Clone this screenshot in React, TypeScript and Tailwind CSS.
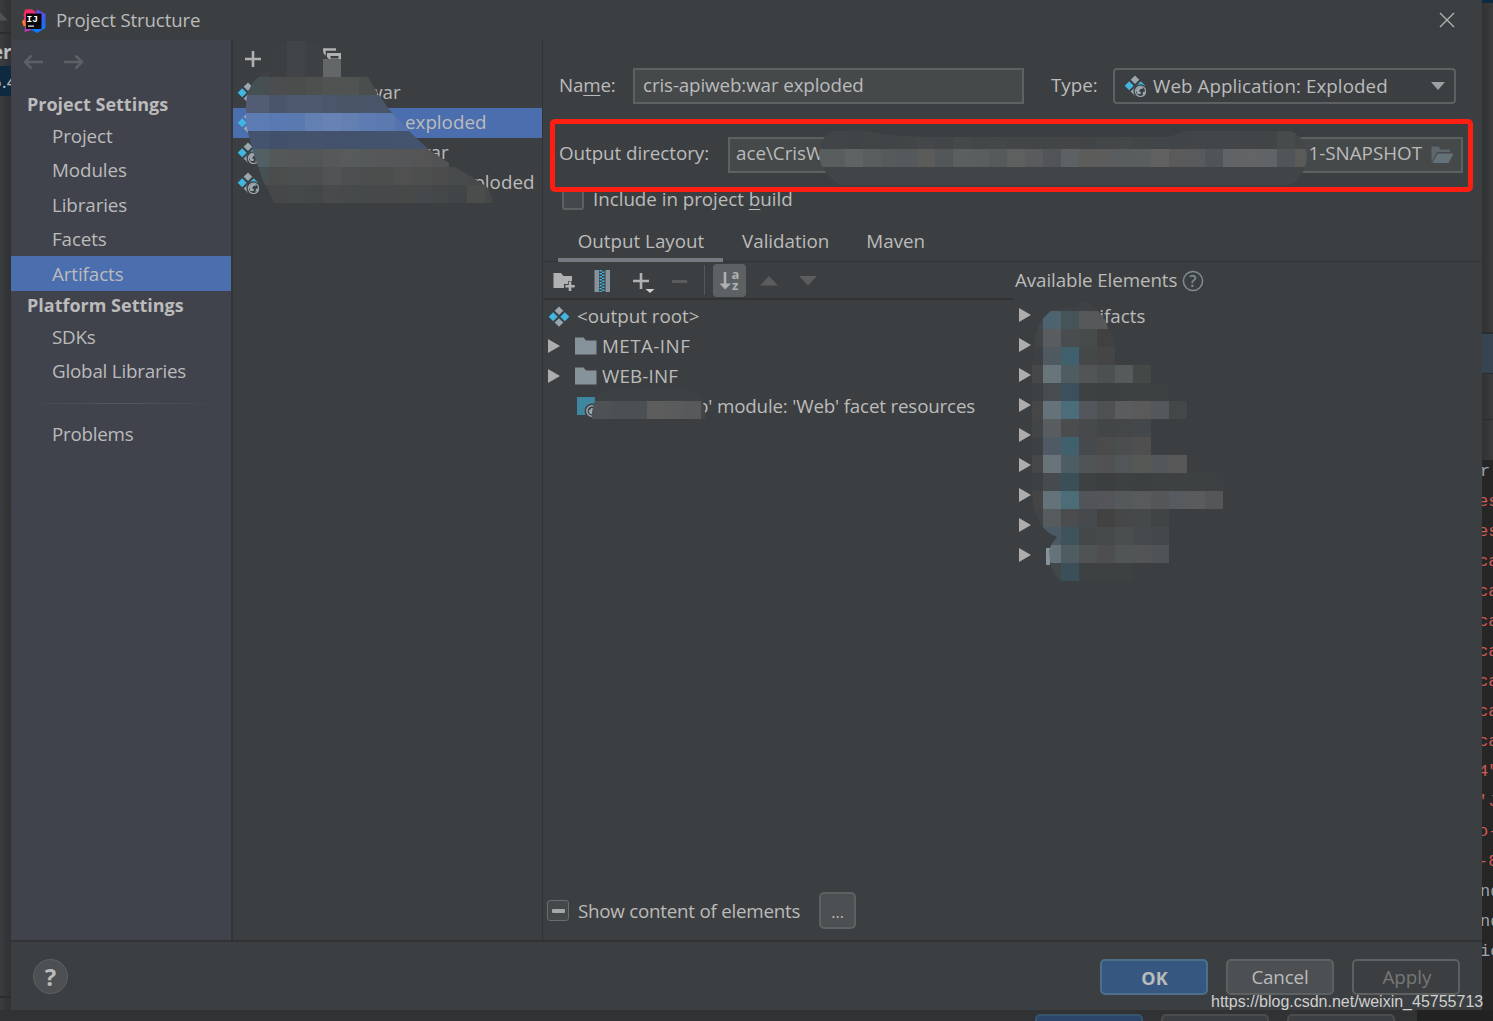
import React from "react";

const settings = ["Project", "Modules", "Libraries", "Facets", "Artifacts"];

const editorLines = [
  { text: "r", color: "text-[#9da5ae]" },
  { text: "es", color: "text-[#cf5b56]" },
  { text: "es", color: "text-[#cf5b56]" },
  { text: "ca", color: "text-[#cf5b56]" },
  { text: "ca", color: "text-[#cf5b56]" },
  { text: "ca", color: "text-[#cf5b56]" },
  { text: "ca", color: "text-[#cf5b56]" },
  { text: "ca", color: "text-[#cf5b56]" },
  { text: "ca", color: "text-[#cf5b56]" },
  { text: "ca", color: "text-[#cf5b56]" },
  { text: "4\"", color: "text-[#cf5b56]" },
  { text: "'J", color: "text-[#cf5b56]" },
  { text: "o-", color: "text-[#cf5b56]" },
  { text: "-8", color: "text-[#cf5b56]" },
  { text: "nd", color: "text-[#9da5ae]" },
  { text: "nd", color: "text-[#9da5ae]" },
  { text: "ic", color: "text-[#9da5ae]" },
];

type MosaicRow = { x: number; y: number; colors: string[] };

const listMosaic: MosaicRow[] = [
  { x: 251, y: 41, colors: ["#3d4143", "#3d4042", "#414547", "#3e4143", "#3e4143"] },
  { x: 251, y: 59, colors: ["#3f4446", "#3d4042", "#414547", "#3e4143", "#636768"] },
  { x: 251, y: 77, colors: ["#465053", "#4c4d4e", "#4b4d4d", "#4d504e", "#505352", "#4f5352", "#4a4f4e"] },
  { x: 251, y: 95, colors: ["#525d74", "#4b5569", "#4d596c", "#4c596e", "#4a566a", "#4a5568", "#495569", "#495569"] },
  { x: 251, y: 113, colors: ["#5d7cb3", "#5a79b2", "#5a79ae", "#6480b3", "#6782b4", "#647fb1", "#5f7cb2", "#5c79b0", "#5574ae"] },
  { x: 251, y: 131, colors: ["#44546e", "#42506b", "#44526c", "#44526b", "#43516d", "#42516c", "#43526d", "#44536d", "#44536e", "#44536e"] },
  { x: 251, y: 149, colors: ["#526065", "#535859", "#555657", "#535657", "#565859", "#575b5c", "#55595a", "#555758", "#545657", "#555556", "#525354"] },
  { x: 251, y: 167, colors: ["#475053", "#4b4d4d", "#4c4f50", "#4d4e4f", "#525354", "#4d4f50", "#4b4e4f", "#4c4e4e", "#505051", "#4d4e4e", "#4c4c4c", "#484b4b", "#464949", "#444747"] },
  { x: 251, y: 185, colors: ["#434748", "#454748", "#46494a", "#444748", "#484a4b", "#474a4b", "#45494a", "#464849", "#474949", "#45494b", "#434748", "#414547", "#4a4d4b", "#444847"] },
];

const outputMosaic: MosaicRow[] = [
  { x: 809, y: 131, colors: ["#414547", "#414547", "#404446", "#414546", "#414547", "#424647", "#45484a", "#424648", "#46494a", "#434748", "#444849", "#424647", "#424647", "#424647", "#444546", "#414547", "#434748", "#45484a", "#424647", "#424648", "#414547", "#424648", "#424648", "#424648", "#414547", "#414547", "#474b4c", "#434748"] },
  { x: 809, y: 149, colors: ["#5a5d5e", "#5a5d5e", "#606364", "#5a5e5f", "#575a5b", "#55595b", "#5b5c59", "#515658", "#5c5f60", "#5b5e5f", "#575a5b", "#5e6060", "#595b5c", "#515557", "#5e6164", "#5c5d5b", "#5b5c5b", "#5a5d5f", "#5b5e5f", "#626162", "#5a5a5a", "#585b5d", "#505456", "#606466", "#626465", "#606466", "#515557", "#5a5b59", "#545757"] },
  { x: 809, y: 167, colors: Array(28).fill("#414547") },
];

const elementsMosaic: MosaicRow[] = [
  { x: 1025, y: 293, colors: ["#3c3f41", "#3f4244", "#3f4244", "#3f4244", "#3f4244"] },
  { x: 1025, y: 311, colors: ["#424849", "#4d6370", "#445459", "#565859", "#565859"] },
  { x: 1025, y: 329, colors: ["#414546", "#595d5f", "#4a4d4f", "#484b4c", "#414142"] },
  { x: 1025, y: 347, colors: ["#3d4143", "#50595f", "#40606d", "#454849", "#454546"] },
  { x: 1025, y: 365, colors: ["#464748", "#68757b", "#4f5d63", "#525555", "#4b5050", "#565a5a", "#444847"] },
  { x: 1025, y: 383, colors: ["#3d4143", "#464c4f", "#3b505a", "#3d4142", "#3d4040", "#3d4142", "#3d4142", "#3e4142"] },
  { x: 1025, y: 401, colors: ["#464647", "#65727a", "#4c6c79", "#53565a", "#4d5152", "#5b5c5d", "#5b5a5b", "#55585b", "#434747"] },
  { x: 1025, y: 419, colors: ["#424546", "#595d5f", "#4a4c4e", "#474a4c", "#434647", "#444748", "#45484a"] },
  { x: 1025, y: 437, colors: ["#3d4143", "#505a64", "#40606d", "#474a4c", "#4b4b4c", "#4b4e4f", "#4f4f50"] },
  { x: 1025, y: 455, colors: ["#464748", "#68737a", "#4d5d63", "#505456", "#515153", "#525658", "#565856", "#53575a", "#585859"] },
  { x: 1025, y: 473, colors: ["#3d4143", "#464b4f", "#3b4f58", "#3d4142", "#3b3f40", "#3d4142", "#3c4041", "#3e4142", "#3d4142", "#3d4142", "#3e4143"] },
  { x: 1025, y: 491, colors: ["#454546", "#64727a", "#4c6c78", "#515458", "#545558", "#54595c", "#595a5c", "#555657", "#555b5f", "#5a5b5d", "#555658"] },
  { x: 1025, y: 509, colors: ["#404446", "#565b5e", "#4a4c4e", "#474a4c", "#424243", "#464748", "#45494a", "#404445"] },
  { x: 1025, y: 527, colors: ["#3f4446", "#4b5964", "#3f535b", "#434849", "#464a4d", "#4a4e4f", "#464a4c", "#44484b"] },
  { x: 1025, y: 545, colors: ["#424648", "#66737a", "#4f5d63", "#505354", "#4e4e50", "#525555", "#535455", "#505355"] },
  { x: 1025, y: 563, colors: ["#3f4446", "#42474a", "#3b4f58", "#3d4142", "#3d4142", "#3e4142"] },
];

const facetMosaic: MosaicRow[] = [
  { x: 575, y: 383, colors: ["#3e4143", "#3e4143", "#3e4143", "#3e4143", "#3e4143", "#3e4143", "#3e4143", "#3d4042"] },
  { x: 575, y: 401, colors: ["#4d5154", "#4e5255", "#4c5053", "#4d5052", "#5d5d5e", "#595b5c", "#58595b", "#434648"] },
];

const Mosaic: React.FC<{
  id: string;
  clip: string;
  rows: MosaicRow[];
  x: number;
  y: number;
  w: number;
  h: number;
  className: string;
}> = ({ id, clip, rows, x, y, w, h, className }) => (
  <svg className={`absolute ${className}`} width={w} height={h} viewBox={`${x} ${y} ${w} ${h}`}>
    <clipPath id={id}>
      <path d={clip} />
    </clipPath>
    <g clipPath={`url(#${id})`} shapeRendering="crispEdges">
      {rows.map((row) =>
        row.colors.map((color, i) => (
          <rect
            key={`${row.y}-${i}`}
            x={i === 0 ? row.x - 6 : row.x + i * 18}
            y={row.y}
            width={i === 0 ? 24 : 18}
            height="18"
            fill={color}
          />
        ))
      )}
    </g>
  </svg>
);

const Logo = () => (
  <svg width="24" height="24" viewBox="0 0 24 24">
    <defs>
      <linearGradient id="lg1" x1="0" y1="0" x2="1" y2="1">
        <stop offset="0" stopColor="#fe2857" />
        <stop offset="1" stopColor="#c838a0" />
      </linearGradient>
      <linearGradient id="lg2" x1="0" y1="0" x2="0" y2="1">
        <stop offset="0" stopColor="#7448e8" />
        <stop offset="0.5" stopColor="#2f63ee" />
        <stop offset="1" stopColor="#087cfa" />
      </linearGradient>
    </defs>
    <path d="M0 12.500L3 9L6 18L1.500 17z" fill="#fc801d" />
    <path d="M3 0.500L10 0.200L16 5L8 20L3.500 16L2.500 10L1.500 6z" fill="url(#lg1)" />
    <path d="M3 18L9 17L10 21L2.500 23z" fill="#b03ab8" />
    <path d="M15 0.500L23.500 5V19L15 24L8 20L14 5z" fill="url(#lg2)" />
    <rect x="4" y="4.500" width="15.500" height="15.500" fill="#080808" />
    <text x="4.500" y="12.500" fill="#fff" fontSize="9.500" fontWeight="700" fontFamily="Liberation Mono, monospace">IJ</text>
    <rect x="6" y="16.500" width="6" height="1.200" fill="#eee" />
  </svg>
);

const ArtifactIcon = ({ web = false }: { web?: boolean }) => (
  <svg className="shrink-0" width="22" height="22" viewBox="0 0 22 22">
    <path d="M11 0.500L15.300 4.800L11 9.100L6.700 4.800z" fill="#9aa7b0" />
    <path d="M5.200 6.300L9.700 10.800L5.200 15.300L0.700 10.800z" fill="#40b6e0" />
    <path d="M16.800 6.300L21.300 10.800L16.800 15.300L12.300 10.800z" fill="#40b6e0" />
    <path d="M11 12.200L15.300 16.500L11 20.800L6.700 16.500z" fill="#9aa7b0" />
    {web && (
      <>
        <circle cx="16.500" cy="16.300" r="7" fill="#3c3f41" />
        <circle cx="16.500" cy="16.300" r="5.200" fill="none" stroke="#9aa7b0" strokeWidth="1.200" />
        <path d="M11.800 15L14 12L18.500 12L19 13.500L16.500 14L15 16L17 17.500L16.500 19L13.500 19z" fill="#9aa7b0" />
        <path d="M19 17L21.500 16L20.500 19L18.500 20z" fill="#9aa7b0" />
      </>
    )}
  </svg>
);

const FolderIcon = () => (
  <svg className="shrink-0" width="22" height="18" viewBox="0 0 22 18">
    <path d="M0 0.500H8.500L11 3.500H21.500V17.500H0z" fill="#87939a" />
  </svg>
);

const Expander = () => (
  <svg className="mb-px shrink-0" width="12" height="14" viewBox="0 0 12 14">
    <path d="M0 0L12 7L0 14z" fill="#adadad" />
  </svg>
);

const Plus = () => (
  <svg width="16" height="16" viewBox="0 0 16 16">
    <path d="M8 0V16M0 8H16" stroke="#afb1b3" strokeWidth="2.600" />
  </svg>
);

const Sidebar = () => (
  <div className="w-[222px] shrink-0 border-r-2 border-[#343537] bg-[#40434c]">
    <div className="flex h-[48px] items-center gap-[19px] pb-[4px] pl-[12px]">
      <svg width="21" height="16" viewBox="0 0 21 16">
        <path d="M8.500 1.500L2 8L8.500 14.500M2 8H20" fill="none" stroke="#5d6064" strokeWidth="2.500" />
      </svg>
      <svg width="21" height="16" viewBox="0 0 21 16">
        <path d="M12.500 1.500L19 8L12.500 14.500M19 8H1" fill="none" stroke="#5d6064" strokeWidth="2.500" />
      </svg>
    </div>
    <div className="flex h-[31px] items-center pl-[16px] text-[18px] font-bold">Project Settings</div>
    {settings.map((item, i) => (
      <div
        key={item}
        className={`flex items-center pl-[41px] ${item === "Artifacts" ? "bg-[#4b6eaf] pt-[2px]" : "pt-px"} ${i === 4 ? "h-[35px]" : i === 0 ? "h-[34px]" : "h-[34.3px]"}`}
      >
        <span className="tracking-[-0.1px]">{item}</span>
      </div>
    ))}
    <div className="flex h-[29px] items-center pl-[16px] text-[18px] font-bold">Platform Settings</div>
    <div className="flex h-[34px] items-center pl-[41px] pt-[2px] tracking-[-0.2px]">SDKs</div>
    <div className="flex h-[34px] items-center pl-[41px] pt-[2px] tracking-[-0.2px]">Global Libraries</div>
    <div className="mx-[12px] mt-[15px] h-px bg-linear-to-r from-transparent via-[#55585f] to-transparent" />
    <div className="mt-[13px] flex h-[34px] items-center pl-[41px] pt-[2px] tracking-[-0.25px]">Problems</div>
  </div>
);

const ArtifactList = () => (
  <div className="relative w-[310px] shrink-0 border-r border-[#323334]">
    <div className="flex h-[37px] items-center justify-between pl-[12px] pr-[201px]">
      <Plus />
      <svg className="mb-[4px]" width="18" height="18" viewBox="0 0 18 18">
        <path d="M0 1.500H13M1.500 1V12" stroke="#afb1b3" strokeWidth="2.400" />
        <path d="M4 5H18V18H4zM7.500 8V10.500H15.500V8z" fill="#afb1b3" fillRule="evenodd" />
      </svg>
    </div>
    <div className="flex h-[31px] items-center pl-[4px]">
      <ArtifactIcon />
      <span className="ml-[109px]">war</span>
    </div>
    <div className="flex h-[30px] items-center bg-[#4b6eaf] pl-[4px]">
      <ArtifactIcon />
      <span className="mb-[2px] ml-[146px]">exploded</span>
    </div>
    <div className="flex h-[30px] items-center pl-[4px]">
      <ArtifactIcon web />
      <span className="mb-[2px] ml-[157px]">war</span>
    </div>
    <div className="flex h-[30px] items-center pl-[4px]">
      <ArtifactIcon web />
      <span className="mb-[2px] ml-[194px]">exploded</span>
    </div>
    <Mosaic
      id="list"
      rows={listMosaic}
      x={233}
      y={40}
      w={300}
      h={170}
      className="left-0 top-0"
      clip="M269 71V59Q272 46 287 41H306Q318 43 324 54L329 59H341V77H368L377 92L388 108L408 130L428 149L449 163V167H455L475 179L487 187Q491 192 493 203H274L263 181L254 155L246 125V104Q247 80 269 71z"
    />
  </div>
);

const Toolbar = () => (
  <div className="flex h-[38px] w-[470px] items-center border-b-2 border-[#323334] pl-[10px]">
    <svg className="mt-[2px]" width="22" height="20" viewBox="0 0 22 20">
      <path d="M0.500 2H8L10.500 5H19V10H15V13H11V17H0.500z" fill="#afb1b3" />
      <path d="M17 10.500V20M12.300 15.200H21.700" stroke="#afb1b3" strokeWidth="2.600" />
    </svg>
    <svg className="ml-[19px] mt-[2px]" width="17" height="22" viewBox="0 0 17 22">
      <path d="M0.500 0H5V22H0.500zM11.500 0H16V22H11.500z" fill="#87939a" />
      <path d="M6.700 0V22" stroke="#40b6e0" strokeWidth="2.400" strokeDasharray="1.500 1.500" />
      <path d="M9.300 1.500V22" stroke="#40b6e0" strokeWidth="2.400" strokeDasharray="1.500 1.500" />
    </svg>
    <svg className="ml-[21px] mt-[2px]" width="24" height="24" viewBox="0 0 24 24">
      <path d="M9 4V20M1 12H17" stroke="#afb1b3" strokeWidth="2.600" />
      <path d="M13.500 20H22.500L18 24z" fill="#d0d0d0" />
    </svg>
    <div className="ml-[16px] mt-[2px] h-[3px] w-[15px] bg-[#5b5c5d]" />
    <div className="ml-[17px] h-[30px] w-px bg-[#555758]" />
    <div className="ml-[8px] flex h-[33px] w-[33px] items-center justify-center rounded-[4px] bg-[#5c6164]">
      <svg width="22" height="24" viewBox="0 0 22 24">
        <path d="M6 4V17" stroke="#afb1b3" strokeWidth="2.600" />
        <path d="M0.500 15.500H12L6.200 21.500z" fill="#afb1b3" />
        <text x="12.500" y="11" fill="#afb1b3" fontSize="13" fontWeight="700" fontFamily="Open Sans, sans-serif">a</text>
        <text x="13" y="21.500" fill="#afb1b3" fontSize="13" fontWeight="700" fontFamily="Open Sans, sans-serif">z</text>
      </svg>
    </div>
    <svg className="ml-[14px] mt-[2px]" width="18" height="10" viewBox="0 0 18 10">
      <path d="M9 0L18 9.500H0z" fill="#5b5c5d" />
    </svg>
    <svg className="ml-[21px] mt-px" width="18" height="10" viewBox="0 0 18 10">
      <path d="M9 9.500L18 0H0z" fill="#5b5c5d" />
    </svg>
  </div>
);

const OutputTree = () => (
  <div className="relative flex w-[470px] flex-col pt-px">
    <div className="flex h-[30px] items-center gap-[7px] pl-[5px]">
      <div className="mt-px">
        <ArtifactIcon />
      </div>
      <span>&lt;output root&gt;</span>
    </div>
    {[
      { name: "META-INF", tracking: "tracking-[0.45px]" },
      { name: "WEB-INF", tracking: "tracking-[0.15px]" },
    ].map(({ name, tracking }) => (
      <div key={name} className="flex h-[30px] items-center pl-[5px]">
        <Expander />
        <div className="ml-[15px]">
          <FolderIcon />
        </div>
        <span className={`ml-[5px] ${tracking}`}>{name}</span>
      </div>
    ))}
    <div className="flex h-[30px] items-center pl-[34px]">
      <svg className="shrink-0" width="22" height="22" viewBox="0 0 22 22">
        <rect y="2" width="18" height="18" fill="#3f87a1" />
        <circle cx="15" cy="16" r="7.500" fill="#3c3f41" />
        <circle cx="15" cy="16" r="5.200" fill="none" stroke="#9aa7b0" strokeWidth="1.500" />
        <path d="M11.500 16L14.500 13L17 13L15 17L16 19L13 19z" fill="#9aa7b0" />
      </svg>
      <span className="ml-[98px] whitespace-nowrap tracking-[-0.18px]">b' module: 'Web' facet resources</span>
    </div>
    <Mosaic
      id="facet"
      rows={facetMosaic}
      x={543}
      y={383}
      w={200}
      h={40}
      className="left-0 top-[83px]"
      clip="M595 401Q603 389 616 387H684Q696 391 702 401Q706 408 705 419H592Q592 406 595 401Z"
    />
  </div>
);

const AvailableElements = () => (
  <div className="relative flex flex-1 flex-col">
    <div className="flex h-[38px] items-center pl-[2px]">
      <span className="mb-[2px] tracking-[-0.1px]">Available Elements</span>
      <svg className="ml-[5px]" width="22" height="22" viewBox="0 0 22 22">
        <circle cx="11" cy="11" r="9.600" fill="none" stroke="#7f8b91" strokeWidth="1.500" />
        <text x="11" y="16.500" textAnchor="middle" fill="#7f8b91" fontSize="16" fontWeight="600" fontFamily="Open Sans, sans-serif">?</text>
      </svg>
    </div>
    {[0, 1, 2, 3, 4, 5, 6, 7, 8].map((i) => (
      <div key={i} className="flex h-[30px] items-center pl-[6px] pt-px">
        <Expander />
        {i === 0 && <span className="ml-[42px] mt-px">Artifacts</span>}
      </div>
    ))}
    <div className="absolute left-[33px] top-[286px] h-[17px] w-[4px] bg-[#87939a]" />
    <Mosaic
      id="elements"
      rows={elementsMosaic}
      x={1013}
      y={300}
      w={220}
      h={290}
      className="left-0 top-[38px]"
      clip="M1034 347Q1035 322 1052 310L1079 306V302Q1090 301 1100 313Q1106 319 1108 329Q1114 335 1115 347V365H1151V383H1169V401H1187V419H1151V455H1187V473H1223V509H1169V563H1133V581H1061Q1050 573 1049 551Q1051 543 1057 537Q1044 532 1039 521Q1032 509 1032 491V365H1034z"
    />
  </div>
);

const Main = () => (
  <div className="relative flex flex-1 flex-col">
    <div className="flex h-[91px] items-center pl-[16px]">
      <span className="w-[74px] tracking-[-0.2px]">
        Na<span className="underline underline-offset-[3px]">m</span>e:
      </span>
      <div className="flex h-[36px] w-[391px] items-center border-2 border-[#5e6162] bg-[#45494a] pl-[8px] tracking-[-0.12px]">
        cris-apiweb:war exploded
      </div>
      <span className="ml-[27px] w-[62px]">Type:</span>
      <div className="flex h-[36px] w-[343px] items-center rounded-[4px] border-2 border-[#5e6162] pl-[9px] pr-[9px]">
        <ArtifactIcon web />
        <span className="ml-[7px] mt-px flex-1 whitespace-nowrap tracking-[0.05px]">Web Application: Exploded</span>
        <svg width="14" height="8" viewBox="0 0 14 8">
          <path d="M0 0H14L7 8z" fill="#9da0a2" />
        </svg>
      </div>
    </div>

    <div className="flex h-[47px] items-center pl-[16px]">
      <span className="mb-[2px] w-[169px] tracking-[-0.05px]">Output directory:</span>
      <div className="flex h-[36px] w-[735px] items-center justify-between border-2 border-[#5e6162] bg-[#45494a] pl-[6px] pr-[7px]">
        <span className="mb-[2px]">ace\CrisW</span>
        <div className="flex items-center gap-[9px]">
          <span className="mb-[2px]">1-SNAPSHOT</span>
          <svg className="mt-[2px]" width="23" height="18" viewBox="0 0 23 18">
            <path d="M0.500 15V0.500H7.500L10 3.500H19V6H6L1 16z" fill="#5d676c" />
            <path d="M6.500 7.500H22.500L17.500 17H1.500z" fill="#66727a" />
          </svg>
        </div>
      </div>
    </div>

    <div className="flex h-[42px] items-center pl-[19px]">
      <div className="h-[21px] w-[22px] rounded-[3px] border-2 border-[#5e6162] bg-[#43484a]" />
      <span className="ml-[9px] tracking-[-0.03px]">
        Include in project <span className="underline underline-offset-[3px]">b</span>uild
      </span>
    </div>

    <div className="flex h-[42px] border-b border-[#323334] pl-[15px]">
      <div className="flex h-[42px] w-[165px] items-center justify-center border-b-4 border-[#747a80] pl-px pt-[4px]">Output Layout</div>
      <div className="flex h-[42px] items-center pl-[19px]">Validation</div>
      <div className="flex h-[42px] items-center pl-[37px]">Maven</div>
    </div>

    <div className="flex flex-1">
      <div className="flex flex-col">
        <Toolbar />
        <OutputTree />
      </div>
      <AvailableElements />
    </div>

    <div className="flex h-[58px] items-start pl-[4px]">
      <div className="mt-[18px] flex h-[21px] w-[22px] items-center justify-center rounded-[3px] border-[1.5px] border-[#6b6d6e] bg-[#43484a]">
        <div className="h-[4px] w-[13px] rounded-[1px] bg-[#a7a7a7]" />
      </div>
      <span className="ml-[9px] mt-[14px] leading-[30px] tracking-[-0.25px]">Show content of elements</span>
      <div className="ml-[19px] mt-[10px] flex h-[37px] w-[37px] items-center justify-center rounded-[5px] border-2 border-[#5e6162] bg-[#4c5052] pt-[3px] text-[16px]">
        ...
      </div>
    </div>

    <Mosaic
      id="output"
      rows={outputMosaic}
      x={800}
      y={125}
      w={520}
      h={65}
      className="left-[257px] top-[85px]"
      clip="M819 155Q821 136 832 131H867Q890 136 925 137H1165Q1177 135 1184 131H1291Q1307 138 1307 158Q1304 179 1290 185H840Q820 172 819 155z"
    />
    <div className="absolute left-[7px] top-[79px] h-[73px] w-[923px] rounded-[5px] border-5 border-[#ff1e12]" />
  </div>
);

const LeftStrip = () => (
  <div className="flex w-[11px] shrink-0 flex-col overflow-hidden bg-linear-to-r from-[#3a3d3f] to-[#2f3133]">
    <div className="flex h-[34px] items-end border-b-2 border-[#2c2d2e] pb-[11px]">
      <svg width="8" height="9" viewBox="0 0 8 9">
        <path d="M0 0L8 8.500H0z" fill="#505253" />
      </svg>
    </div>
    <div className="flex h-[32px] items-center pt-[4px] font-bold">
      <span className="ml-[-8px]">er</span>
    </div>
    <div className="flex h-[30px] items-center bg-[#0e2a41]">
      <span className="ml-[-9px]">5.4</span>
    </div>
    <div className="h-[902px] border-b-2 border-[#2c2d2e]" />
  </div>
);

const RightStrip = () => (
  <div className="flex w-[11px] shrink-0 flex-col overflow-hidden bg-linear-to-r from-[#303233] to-[#393b3d]">
    <div className="h-[3px] bg-[#0e2a41]" />
    <div className="h-[331px] border-b-2 border-[#2c2d2e]" />
    <div className="h-[40px] border-b border-[#2c2d2e] bg-[#364350]" />
    <div className="h-[46px] border-b border-[#2c2d2e]" />
    <div className="h-[40px]" />
    <div className="flex-1 bg-[#262626] pt-px font-['Liberation_Mono',monospace] text-[17px]">
      {editorLines.map((line, i) => (
        <div key={i} className={`h-[30px] whitespace-nowrap leading-[22px] ${line.color}`}>
          <span className={i === 0 || i > 13 ? "ml-[-2px]" : "ml-[-4px]"}>{line.text}</span>
        </div>
      ))}
    </div>
  </div>
);

const App: React.FC = () => {
  return (
    <div className="relative flex h-[1021px] w-[1493px] flex-col overflow-hidden bg-[#303233] font-['Open_Sans','Noto_Sans',sans-serif] text-[18.8px] leading-none text-[#bbbbbb]">
      <div className="flex h-[1010px]">
        <LeftStrip />
        <div className="flex w-[1471px] flex-col bg-[#3c3f41]">
          <div className="flex h-[40px] items-center pl-[11px] pr-[27px]">
            <div className="mt-[2px]">
              <Logo />
            </div>
            <span className="ml-[10px] flex-1 text-[18.6px] tracking-[-0.12px]">Project Structure</span>
            <svg width="16" height="16" viewBox="0 0 16 16">
              <path d="M1 1L15 15M15 1L1 15" stroke="#afb1b3" strokeWidth="1.400" />
            </svg>
          </div>
          <div className="flex h-[900px]">
            <Sidebar />
            <ArtifactList />
            <Main />
          </div>
          <div className="flex h-[70px] items-center border-t-2 border-[#323334] pl-[22px] pr-[22px] pt-px">
            <div className="flex h-[35px] w-[35px] items-center justify-center rounded-full border-[1.5px] border-[#5e6162] bg-[#4c5052] text-[24px] font-bold">
              ?
            </div>
            <div className="flex flex-1 justify-end gap-[18px]">
              <button className="h-[36px] w-[108px] rounded-[5px] border-2 border-[#4c708c] bg-[#365880] pl-px pt-[2px] text-[18px] font-bold">OK</button>
              <button className="h-[36px] w-[108px] rounded-[5px] border-2 border-[#5e6162] bg-[#4c5052] pt-[2px] tracking-[-0.15px]">Cancel</button>
              <button className="h-[36px] w-[108px] rounded-[5px] border-2 border-[#5e6162] pl-[2px] pt-[2px] text-[#777777]">Apply</button>
            </div>
          </div>
        </div>
        <RightStrip />
      </div>
      <div className="flex h-[11px] overflow-hidden bg-[#303233]">
        <div className="flex w-[1417px] justify-end gap-[18px] pr-[22px] pt-[4px]">
          <div className="h-[36px] w-[108px] shrink-0 rounded-[5px] border-2 border-[#36556e] bg-[#2b4668]" />
          <div className="h-[36px] w-[108px] shrink-0 rounded-[5px] border-2 border-[#4a4d4e] bg-[#3c3f41]" />
          <div className="h-[36px] w-[108px] shrink-0 rounded-[5px] border-2 border-[#4a4d4e] bg-[#3c3f41]" />
        </div>
        <div className="flex-1 bg-[#222222]" />
      </div>
      <div className="absolute left-[1211px] top-[993px] font-['Liberation_Sans',sans-serif] text-[16px] leading-[18px] text-[#d0d0d0]">
        https://blog.csdn.net/weixin_45755713
      </div>
    </div>
  );
};

export default App;
